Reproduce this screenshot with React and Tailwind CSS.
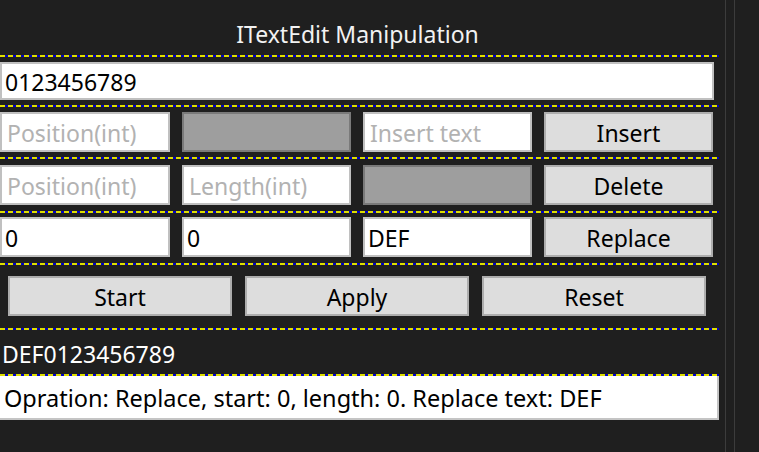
import React from "react";

const font = { fontFamily: '"Noto Sans", "Open Sans", sans-serif' };

function Dash({ className = "" }) {
  return (
    <div
      className={"h-[2px] w-[719px] bg-[repeating-linear-gradient(90deg,#dede00_0px,#dede00_5px,#0000c8_5px,#0000c8_8px)] " + className}
    />
  );
}

function Field({ text, placeholder }) {
  return (
    <div className="h-[40px] bg-white border-2 border-[#c0c0c0] flex items-center pl-[3px] overflow-hidden">
      {text ? (
        <span className="mt-[2px] text-[23px] text-black leading-none">{text}</span>
      ) : (
        <span className="mt-[2px] text-[23px] text-[#b2b2b2] leading-none pl-[2px]">{placeholder}</span>
      )}
    </div>
  );
}

function Gray() {
  return <div className="h-[40px] bg-[#9e9e9e] border-2 border-[#7a7a7a]" />;
}

function Btn({ label, className = "" }) {
  return (
    <div className={"h-[40px] bg-[#dddddd] border-2 border-[#adadad] flex items-center justify-center " + className}>
      <span className="mt-[2px] text-[23px] text-black leading-none">{label}</span>
    </div>
  );
}

export default function App() {
  return (
    <div className="w-[759px] h-[452px] bg-[#1f1f1f] flex overflow-hidden" style={font}>
      <div className="w-[719px] flex flex-col">
        <div className="h-[55px] flex items-center justify-center pt-[14px] pr-[4px]">
          <span className="text-[23px] text-[#f2f2f2] leading-none">ITextEdit Manipulation</span>
        </div>
        <Dash />
        <div className="mt-[5px] w-[714px] h-[38px] bg-white border-2 border-[#c0c0c0] flex items-center pl-[3px]">
          <span className="mt-[2px] text-[23px] text-black leading-none">0123456789</span>
        </div>
        <Dash className="mt-[5px]" />
        <div className="mt-[5px] grid grid-cols-[170px_169px_169px_169px] gap-x-[12px]">
          <Field placeholder="Position(int)" />
          <Gray />
          <Field placeholder="Insert text" />
          <Btn label="Insert" />
        </div>
        <Dash className="mt-[5px]" />
        <div className="mt-[6px] grid grid-cols-[170px_169px_169px_169px] gap-x-[12px]">
          <Field placeholder="Position(int)" />
          <Field placeholder="Length(int)" />
          <Gray />
          <Btn label="Delete" />
        </div>
        <Dash className="mt-[6px]" />
        <div className="mt-[4px] grid grid-cols-[170px_169px_169px_169px] gap-x-[12px]">
          <Field text="0" />
          <Field text="0" />
          <Field text="DEF" />
          <Btn label="Replace" />
        </div>
        <Dash className="mt-[6px]" />
        <div className="mt-[11px] pl-[8px] flex gap-x-[13px]">
          <Btn label="Start" className="w-[224px]" />
          <Btn label="Apply" className="w-[224px]" />
          <Btn label="Reset" className="w-[224px]" />
        </div>
        <Dash className="mt-[12px]" />
        <div className="h-[44px] flex items-center pl-[2px]">
          <span className="mt-[4px] text-[23px] text-white leading-none">DEF0123456789</span>
        </div>
        <Dash />
        <div className="h-[44px] w-[719px] bg-white border-r-2 border-b-2 border-[#c4c4c4] flex items-center pl-[4px]">
          <span className="mt-[4px] text-[23.5px] text-black leading-none">Opration: Replace, start: 0, length: 0. Replace text: DEF</span>
        </div>
      </div>
      <div className="ml-[6px] w-px h-full bg-[#3c3c3c]" />
      <div className="ml-[8px] w-px h-full bg-[#3c3c3c]" />
    </div>
  );
}
